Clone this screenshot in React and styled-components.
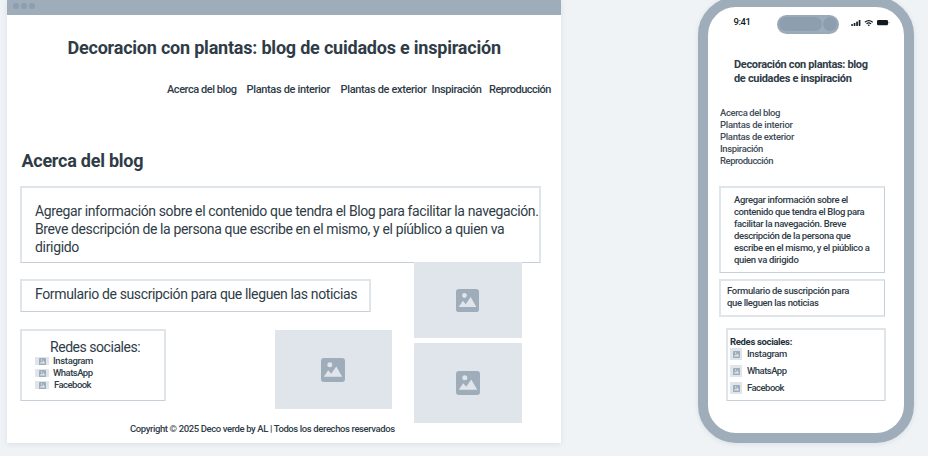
import React from 'react';
import styled, { createGlobalStyle } from 'styled-components';

const Global = createGlobalStyle`
  *{box-sizing:border-box;}
  body{margin:0;background:#fff;font-family:Roboto,"Liberation Sans",sans-serif;color:#2f3c47;}
  h1,h2,p,ul{margin:0;padding:0;font-size:inherit;font-weight:inherit;list-style:none;}
`;

const Stage = styled.div`
  display:flex;width:928px;height:456px;overflow:hidden;background:#eff3f6;padding-left:7px;
`;
const Browser = styled.section`
  width:554px;height:443px;background:#fff;box-shadow:0 1px 5px rgba(60,80,100,.12);flex:none;
`;
const TitleBar = styled.div`
  height:15px;background:#9eadb9;display:flex;gap:2px;padding:3px 0 0 6px;
`;
const Dot = styled.i`width:6px;height:6px;border-radius:50%;background:#8d9eae;`;

const Line = styled.span`
  display:block;white-space:nowrap;
  letter-spacing:${p => p.$ls || 0}px;
  margin-left:${p => p.$ml || 0}px;
`;
const SiteTitle = styled.h1`
  font-size:18px;font-weight:700;line-height:22px;margin:22px 0 0 60.5px;
`;
const Nav = styled.nav`
  display:flex;margin:24px 0 0 160px;font-size:11px;font-weight:500;line-height:14px;
`;
const Link = styled.a`
  flex:none;width:${p => p.$w}px;white-space:nowrap;letter-spacing:${p => p.$ls}px;
`;
const Heading = styled.h2`
  font-size:18px;font-weight:700;line-height:22px;margin:53px 0 0 14.4px;
`;
const Panel = styled.div`
  width:${p => p.$w}px;height:${p => p.$h}px;
  border-style:solid;border-color:#e0e5e9;border-width:2px;
  ${p => p.$thinRight && 'border-right:1px solid #c6cfd8;'}
  ${p => !p.$evenBottom && 'border-bottom:1px solid #c6cfd8;'}
`;
const About = styled(Panel)`
  margin:14px 0 0 13px;padding:14px 0 0 13px;font-size:14px;line-height:18px;
`;
const Lower = styled.div`display:flex;margin-left:13px;height:160px;`;
const Main = styled.div`width:372px;padding-top:16px;flex:none;`;
const Signup = styled(Panel)`padding:4px 0 0 13px;font-size:14px;line-height:18px;`;
const Row = styled.div`display:flex;margin-top:17px;`;
const Social = styled(Panel)`padding-top:8px;margin-right:109px;flex:none;`;
const SocialTitle = styled.p`font-size:14px;line-height:17px;margin:0 0 -1px 28px;`;
const SocialItem = styled.li`
  display:flex;align-items:center;height:12px;padding-left:13px;
  font-size:9.5px;font-weight:500;line-height:12px;
`;
const Gallery = styled.div`display:flex;flex-direction:column;gap:5px;margin-left:22px;margin-top:-1px;`;
const Placeholder = styled.div`
  flex:none;width:${p => p.$w}px;height:${p => p.$h}px;margin-top:${p => p.$mt || 0}px;
  background:#e0e5ec;display:flex;align-items:center;justify-content:center;
`;
const Thumb = styled(Placeholder)`margin-right:${p => p.$mr}px;`;
const Footer = styled.footer`
  margin-left:123px;font-size:9.5px;font-weight:500;line-height:12px;
`;

const Phone = styled.section`
  flex:none;width:216px;height:446px;margin:-3px 0 0 137px;
  border:10px solid #9eadb9;border-radius:38px;background:#fff;
  box-shadow:0 1px 5px rgba(60,80,100,.12);
`;
const StatusBar = styled.div`display:flex;height:27px;padding:8px 0 0 25.5px;`;
const Clock = styled.span`
  width:43.5px;font-size:9.5px;font-weight:500;line-height:13px;letter-spacing:-.45px;color:#111a22;
`;
const Signals = styled.div`margin:3px 0 0 12px;`;
const Island = styled.div`
  width:62px;height:19px;border-radius:10px;background:#9eadb9;border:2px solid #9aabb7;
  display:flex;gap:1px;
`;
const Speaker = styled.i`width:43px;height:14px;border-radius:7px;background:#8d9eae;`;
const Lens = styled.i`width:14px;height:14px;border-radius:50%;background:#8d9eae;`;
const PhoneTitle = styled.h1`
  margin:24px 0 0 26px;font-size:11px;font-weight:700;line-height:14px;
`;
const PhoneNav = styled.nav`
  margin:21px 0 0 12px;font-size:9.5px;font-weight:500;line-height:12px;color:#414d58;
`;
const PhoneBox = styled(Panel)`
  margin:${p => p.$mt}px 0 0 ${p => p.$ml}px;padding:${p => p.$pt}px 0 0 ${p => p.$pl}px;
  font-size:9.5px;font-weight:500;line-height:12px;
`;
const Strong = styled.p`font-weight:700;letter-spacing:-.33px;color:#25313c;`;
const PhoneItem = styled.li`display:flex;align-items:center;gap:5px;height:12px;margin-bottom:5px;`;

const Glyph = ({ size, bg = '#e0e5ec' }) => (
  <svg width={size} height={size} viewBox="0 0 24 24">
    <rect width="24" height="24" rx="3" fill="#9eadb9" />
    <circle cx="8.8" cy="6.8" r="2.5" fill={bg} />
    <path d="M2.8 18.8 7.2 12.2 10.2 15.8 15.3 8.4 21.2 18.8Z" fill={bg} />
  </svg>
);
const StatusIcons = () => (
  <svg width="39" height="10" viewBox="0 0 39 10" fill="#111a22" display="block">
    <rect x="0.2" y="6.1" width="1.7" height="1.9" rx=".4" />
    <rect x="2.7" y="5" width="1.7" height="3" rx=".4" />
    <rect x="5.2" y="3.5" width="1.7" height="4.5" rx=".4" />
    <rect x="7.7" y="2" width="1.7" height="6" rx=".4" />
    <g fill="none" stroke="#111a22" strokeWidth="1.2">
      <path d="M13.9 4.2 Q17.8 .9 21.7 4.2" />
      <path d="M15.5 5.9 Q17.8 4 20.1 5.9" />
    </g>
    <path d="M16.6 6.9Q17.8 6.1 19 6.9L17.8 8.2Z" />
    <rect x="26" y="2" width="11" height="5.2" rx="1.3" />
    <rect x="37.5" y="3.7" width=".8" height="1.8" rx=".4" opacity=".6" />
  </svg>
);

const networks = [['Instagram', -.35, 4], ['WhatsApp', -.53, 4], ['Facebook', -.54, 5]];
const sections = [
  ['Acerca del blog', -.45, 79.5, -.39],
  ['Plantas de interior', -.34, 94, -.27],
  ['Plantas de exterior', -.34, 91, -.31],
  ['Inspiración', -.4, 57.5, -.36],
  ['Reproducción', -.5, 62, -.47],
];
const aboutLines = [
  ['Agregar información sobre el', -.35],
  ['contenido que tendra el Blog para', -.37],
  ['facilitar la navegación. Breve', -.34],
  ['descripción de la persona que', -.37],
  ['escribe en el mismo, y el piúblico a', -.34],
  ['quien va dirigido', -.33],
];

export default function App() {
  return (
    <>
      <Global />
      <Stage>
        <Browser>
          <TitleBar><Dot /><Dot /><Dot /></TitleBar>
          <SiteTitle><Line $ls={-.21}>Decoracion con plantas: blog de cuidados e inspiración</Line></SiteTitle>
          <Nav>{sections.map(([t, ls, w]) => <Link key={t} $ls={ls} $w={w}>{t}</Link>)}</Nav>
          <Heading><Line $ls={-.24}>Acerca del blog</Line></Heading>
          <About $w={521} $h={77}>
            <Line $ls={-.375}>Agregar información sobre el contenido que tendra el Blog para facilitar la navegación.</Line>
            <Line $ls={-.37}>Breve descripción de la persona que escribe en el mismo, y el píúblico a quien va</Line>
            <Line $ls={-.32}>dirigido</Line>
          </About>
          <Lower>
            <Main>
              <Signup $w={351} $h={33}>
                <Line $ls={-.365}>Formulario de suscripción para que lleguen las noticias</Line>
              </Signup>
              <Row>
                <Social $w={146} $h={72}>
                  <SocialTitle><Line $ls={-.46}>Redes sociales:</Line></SocialTitle>
                  <ul>
                    {networks.map(([t, ls, ml]) => (
                      <SocialItem key={t}>
                        <Placeholder $w={14} $h={8}><Glyph size={7} /></Placeholder>
                        <Line $ls={ls} $ml={ml}>{t}</Line>
                      </SocialItem>
                    ))}
                  </ul>
                </Social>
                <Thumb $w={116.5} $h={79} $mt={1} $mr={-22}><Glyph size={24} /></Thumb>
              </Row>
            </Main>
            <Gallery>
              <Placeholder $w={107.5} $h={76}><Glyph size={23} /></Placeholder>
              <Placeholder $w={107.5} $h={80}><Glyph size={24} /></Placeholder>
            </Gallery>
          </Lower>
          <Footer><Line $ls={-.39}>Copyright © 2025 Deco verde by AL | Todos los derechos reservados</Line></Footer>
        </Browser>
        <Phone>
          <StatusBar>
            <Clock>9:41</Clock>
            <Island><Speaker /><Lens /></Island>
            <Signals><StatusIcons /></Signals>
          </StatusBar>
          <PhoneTitle>
            <Line $ls={-.34}>Decoración con plantas: blog</Line>
            <Line $ls={-.32}>de cuidades e inspiración</Line>
          </PhoneTitle>
          <PhoneNav>{sections.map(([t, , , ls]) => <Line key={t} $ls={ls}>{t}</Line>)}</PhoneNav>
          <PhoneBox $w={166} $h={87} $mt={19} $ml={11} $pt={6} $pl={13} $thinRight>
            {aboutLines.map(([t, ls]) => <Line key={t} $ls={ls}>{t}</Line>)}
          </PhoneBox>
          <PhoneBox $w={166} $h={38} $mt={6} $ml={11} $pt={4} $pl={6} $thinRight $evenBottom>
            <Line $ls={-.32}>Formulario de suscripción para</Line>
            <Line $ls={-.35}>que lleguen las noticias</Line>
          </PhoneBox>
          <PhoneBox $w={160} $h={73} $mt={11} $ml={18} $pt={6} $pl={2}>
            <Strong>Redes sociales:</Strong>
            <ul>
              {networks.map(([t, ls]) => (
                <PhoneItem key={t}>
                  <Placeholder $w={12} $h={12}><Glyph size={7} /></Placeholder>
                  <Line $ls={ls}>{t}</Line>
                </PhoneItem>
              ))}
            </ul>
          </PhoneBox>
        </Phone>
      </Stage>
    </>
  );
}
